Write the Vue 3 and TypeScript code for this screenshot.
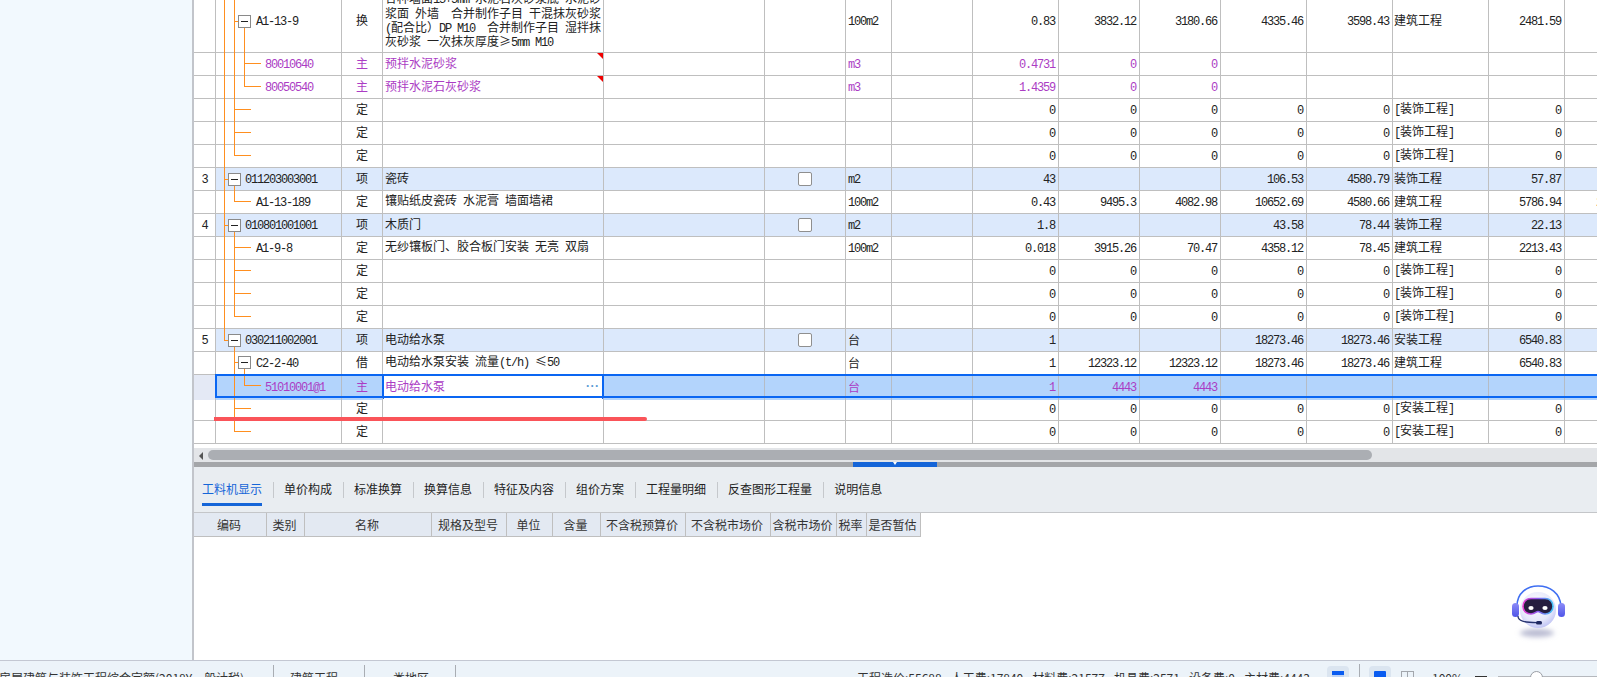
<script setup lang="ts">
interface RawRow {
  no?: string
  lv: number
  code: string
  type: string
  name: string
  chk?: boolean
  unit: string
  v: string[]
  eng: string
  val: string
  last?: string
  kind?: 'plain' | 'bill' | 'mat' | 'sel'
  flag?: boolean
  tall?: boolean
}
interface Cell {
  cls: string
  text: string
  chk?: boolean
  flag?: boolean
}

const empty = (eng: string): RawRow => ({
  lv: 1, code: '', type: '定', name: '', unit: '', v: ['0', '0', '0', '0', '0'], eng, val: '0',
})

const raw: RawRow[] = [
  {
    lv: 1, code: 'A1-13-9', type: '换', tall: true,
    name: '各种墙面15+5mm 水泥石灰砂浆底 水泥砂\n浆面 外墙  合并制作子目 干混抹灰砂浆\n(配合比）DP M10  合并制作子目 湿拌抹\n灰砂浆 一次抹灰厚度≥5mm M10',
    unit: '100m2', v: ['0.83', '3832.12', '3180.66', '4335.46', '3598.43'], eng: '建筑工程', val: '2481.59',
  },
  { lv: 2, code: '80010640', type: '主', name: '预拌水泥砂浆', unit: 'm3', v: ['0.4731', '0', '0', '', ''], eng: '', val: '', kind: 'mat', flag: true },
  { lv: 2, code: '80050540', type: '主', name: '预拌水泥石灰砂浆', unit: 'm3', v: ['1.4359', '0', '0', '', ''], eng: '', val: '', kind: 'mat', flag: true },
  empty('[装饰工程]'),
  empty('[装饰工程]'),
  empty('[装饰工程]'),
  { no: '3', lv: 0, code: '011203003001', type: '项', name: '瓷砖', chk: true, unit: 'm2', v: ['43', '', '', '106.53', '4580.79'], eng: '装饰工程', val: '57.87', kind: 'bill' },
  { lv: 1, code: 'A1-13-189', type: '定', name: '镶贴纸皮瓷砖 水泥膏 墙面墙裙', unit: '100m2', v: ['0.43', '9495.3', '4082.98', '10652.69', '4580.66'], eng: '建筑工程', val: '5786.94', last: '24629.33' },
  { no: '4', lv: 0, code: '010801001001', type: '项', name: '木质门', chk: true, unit: 'm2', v: ['1.8', '', '', '43.58', '78.44'], eng: '装饰工程', val: '22.13', kind: 'bill' },
  { lv: 1, code: 'A1-9-8', type: '定', name: '无纱镶板门、胶合板门安装 无亮 双扇', unit: '100m2', v: ['0.018', '3915.26', '70.47', '4358.12', '78.45'], eng: '建筑工程', val: '2213.43' },
  empty('[装饰工程]'),
  empty('[装饰工程]'),
  empty('[装饰工程]'),
  { no: '5', lv: 0, code: '030211002001', type: '项', name: '电动给水泵', chk: true, unit: '台', v: ['1', '', '', '18273.46', '18273.46'], eng: '安装工程', val: '6540.83', kind: 'bill' },
  { lv: 1, code: 'C2-2-40', type: '借', name: '电动给水泵安装 流量(t/h) ≤50', unit: '台', v: ['1', '12323.12', '12323.12', '18273.46', '18273.46'], eng: '建筑工程', val: '6540.83' },
  { lv: 2, code: '51010001@1', type: '主', name: '电动给水泵', unit: '台', v: ['1', '4443', '4443', '', ''], eng: '', val: '', kind: 'sel' },
  empty('[安装工程]'),
  empty('[安装工程]'),
]

const rows = raw.map((r) => {
  const cells: Cell[] = [
    { cls: 'c-no', text: r.no ?? '' },
    { cls: `c-code lv${r.lv}`, text: r.code },
    { cls: 'c-type', text: r.type },
    { cls: 'c-name', text: r.name, flag: r.flag },
    { cls: '', text: '' },
    { cls: 'c-chk', text: '', chk: r.chk },
    { cls: 'c-unit', text: r.unit },
    { cls: '', text: '' },
    ...r.v.map((t) => ({ cls: 'c-num', text: t })),
    { cls: 'c-eng', text: r.eng },
    { cls: 'c-num', text: r.val },
    { cls: 'c-num c-last', text: r.last ?? '' },
  ]
  return { cells, kind: r.kind ?? 'plain', tall: !!r.tall }
})

function runs(s: string): { t: string; lat: boolean }[] {
  const out: { t: string; lat: boolean }[] = []
  const re = /[\x20-\x7e\n]+|[^\x20-\x7e\n]+/g
  let m: RegExpExecArray | null
  while ((m = re.exec(s))) {
    out.push({ t: m[0], lat: /^[\x20-\x7e\n]/.test(m[0]) })
  }
  return out
}

const tabs = ['工料机显示', '单价构成', '标准换算', '换算信息', '特征及内容', '组价方案', '工程量明细', '反查图形工程量', '说明信息']
const heads = [
  { t: '编码', w: 73 }, { t: '类别', w: 38 }, { t: '名称', w: 127 }, { t: '规格及型号', w: 75 },
  { t: '单位', w: 46 }, { t: '含量', w: 48 }, { t: '不含税预算价', w: 85 }, { t: '不含税市场价', w: 85 },
  { t: '含税市场价', w: 66 }, { t: '税率', w: 30 }, { t: '是否暂估', w: 54 },
]
const stats = ['工程造价:55688', '人工费:17840', '材料费:21577', '机具费:2571', '设备费:0', '主材费:4443']

const treePath = [
  'M224.5 0V340.5H228',
  'M234.5 0V155.5H251 M234.5 109.5H251 M234.5 132.5H251 M234.5 21.5H238',
  'M244.5 28V86.5H261 M244.5 63.5H261',
  'M224.5 179.5H228 M224.5 225.5H228',
  'M234.5 186V201.5H251',
  'M234.5 232V316.5H251 M234.5 247.5H251 M234.5 270.5H251 M234.5 293.5H251',
  'M234.5 346V431.5H251 M234.5 362.5H238 M234.5 408.5H251',
  'M244.5 368V385.5H261',
].join(' ')
const boxes = [
  { x: 238, y: 15 },
  { x: 228, y: 173 },
  { x: 228, y: 219 },
  { x: 228, y: 334 },
  { x: 238, y: 356 },
]
</script>

<template>
  <div class="app">
    <div class="main">
      <aside class="side"></aside>
      <section class="content">
        <div class="grid-wrap">
          <div class="grid">
            <div
              v-for="(row, i) in rows"
              :key="i"
              class="row"
              :class="[row.kind, { tall: row.tall }]"
            >
              <div v-for="(c, j) in row.cells" :key="j" class="cell" :class="c.cls">
                <div class="txt"><span v-for="(r, k) in runs(c.text)" :key="k" :class="{ lat: r.lat }">{{ r.t }}</span></div>
                <i v-if="c.chk" class="chk"></i>
                <i v-if="c.flag" class="flag"></i>
              </div>
            </div>
          </div>
          <svg class="tree" width="200" height="444" viewBox="194 0 200 444" shape-rendering="crispEdges">
            <path :d="treePath" fill="none" stroke="#ff8f1f" stroke-width="1" />
            <g v-for="(b, i) in boxes" :key="i">
              <rect :x="b.x + 0.5" :y="b.y + 0.5" width="12" height="12" fill="#fff" stroke="#8a8a8a" />
              <path :d="`M${b.x + 3} ${b.y + 6.5}H${b.x + 10}`" stroke="#222" />
            </g>
          </svg>
          <div class="selbox"></div>
          <div class="dots">···</div>
          <div class="redline"></div>
        </div>

        <div class="hscroll">
          <div class="arrow"></div>
          <div class="thumb"></div>
        </div>
        <div class="splitter"><div class="grip"><i></i></div></div>

        <div class="tabs">
          <template v-for="(t, i) in tabs" :key="t">
            <span v-if="i > 0" class="tsep"></span>
            <span class="tab" :class="{ on: i === 0 }">{{ t }}</span>
          </template>
        </div>

        <div class="lower">
          <div class="thead">
            <div v-for="h in heads" :key="h.t" class="th" :style="{ width: h.w + 'px' }">{{ h.t }}</div>
          </div>
        </div>
      </section>
    </div>

    <footer class="status">
      <span class="s-item s-first">房屋建筑与装饰工程综合定额(2018Y一般计税)</span>
      <span class="s-sep s1"></span>
      <span class="s-item s-eng">建筑工程</span>
      <span class="s-sep s2"></span>
      <span class="s-item s-area">类地区</span>
      <span class="s-sep s3"></span>
      <div class="stats">
        <span v-for="s in stats" :key="s">{{ s }}</span>
      </div>
      <div class="ctrls">
        <span class="ib"><i class="ico-a"></i></span>
        <span class="vsep"></span>
        <span class="ib"><i class="ico-b"></i></span>
        <span class="ico-c"><i></i></span>
        <span class="pct">100%</span>
        <span class="minus"></span>
        <span class="slider"><i></i></span>
      </div>
    </footer>

    <svg class="robot" width="60" height="64" viewBox="0 0 60 64">
      <defs>
        <radialGradient id="rb" cx="45%" cy="35%" r="70%">
          <stop offset="0" stop-color="#ffffff" />
          <stop offset="0.65" stop-color="#e6e8fb" />
          <stop offset="1" stop-color="#b9bdf3" />
        </radialGradient>
        <linearGradient id="rv" x1="0" y1="0" x2="1" y2="0">
          <stop offset="0" stop-color="#e83fd0" />
          <stop offset="0.5" stop-color="#8a5cf0" />
          <stop offset="1" stop-color="#3fc4f5" />
        </linearGradient>
        <linearGradient id="re" x1="0" y1="0" x2="0" y2="1">
          <stop offset="0" stop-color="#8d8cf7" />
          <stop offset="1" stop-color="#4f55e8" />
        </linearGradient>
        <filter id="rs" x="-30%" y="-80%" width="160%" height="260%">
          <feGaussianBlur stdDeviation="2.4" />
        </filter>
        <filter id="rg" x="-50%" y="-50%" width="200%" height="200%">
          <feGaussianBlur stdDeviation="0.5" />
        </filter>
      </defs>
      <ellipse cx="30" cy="53" rx="17" ry="4" fill="#b9bbd2" filter="url(#rs)" />
      <path d="M10 26C10 13 20 6 31 6C43 6 53 13 54 26" fill="none" stroke="#3f6ff2" stroke-width="1.6" />
      <circle cx="31" cy="30" r="18" fill="url(#rb)" />
      <rect x="5" y="23" width="7" height="14" rx="3.5" fill="url(#re)" />
      <rect x="51" y="23" width="7" height="14" rx="3.5" fill="url(#re)" />
      <path d="M24 18.5H38C44 18.5 46 23 46 26.5C46 31.5 42 34 38 34C34 34 33 31.5 31 31.5C29 31.5 28 34 24 34C20 34 16 31.5 16 26.5C16 23 18 18.5 24 18.5Z" fill="#251d3f" stroke="url(#rv)" stroke-width="1.6" />
      <ellipse cx="24" cy="28" rx="2.6" ry="2" fill="#fff" filter="url(#rg)" />
      <ellipse cx="38" cy="28" rx="2.6" ry="2" fill="#fff" filter="url(#rg)" />
      <path d="M11 36C11 41 17 42.5 30 42.7" fill="none" stroke="#27336f" stroke-width="1.3" />
      <rect x="29" y="41" width="6" height="3.4" rx="1.5" fill="#1f2860" />
    </svg>
  </div>
</template>

<style scoped>
.app {
  position: relative;
  width: 1597px;
  height: 677px;
  overflow: hidden;
  font-family: "Noto Sans CJK SC", "Liberation Sans", sans-serif;
  font-size: 12px;
  color: #222;
  background: #fff;
}
.main {
  display: flex;
  height: 660px;
}
.side {
  width: 192px;
  flex: none;
  background: #f2f9fe;
  border-right: 2px solid #c2c5cb;
  box-sizing: content-box;
}
.content {
  flex: 1;
  min-width: 0;
  display: flex;
  flex-direction: column;
}
.grid-wrap {
  position: relative;
  height: 444px;
  overflow: hidden;
  flex: none;
}
.grid {
  margin-top: -10px;
}
.row {
  display: grid;
  width: max-content;
  height: 23px;
  grid-template-columns: 22px 126px 41px 221px 161px 81px 46px 81px 86px 81px 81px 86px 86px 96px 76px 86px;
  color: #222;
}
.row.tall {
  height: 63px;
}
.cell {
  position: relative;
  display: flex;
  align-items: center;
  box-sizing: border-box;
  border-right: 1px solid #bfbfbf;
  border-bottom: 1px solid #bfbfbf;
  white-space: pre;
  line-height: 22px;
  overflow: hidden;
  min-width: 0;
}
.lat {
  font-family: "Liberation Mono", "DejaVu Sans Mono", monospace;
  font-size: 12px;
  letter-spacing: -1.2px;
}
.c-no,
.c-type,
.c-chk {
  justify-content: center;
}
.c-type,
.c-name,
.c-eng {
  padding-bottom: 2px;
}
.c-code.lv0 { padding-left: 29px; }
.c-code.lv1 { padding-left: 40px; }
.c-code.lv2 { padding-left: 49px; }
.c-name,
.c-unit {
  padding-left: 2px;
}
.c-eng {
  padding-left: 1px;
}
.c-num {
  justify-content: flex-end;
  padding-right: 3px;
}
.c-last {
  padding-right: 7px;
  border-right: 0;
}
.tall .c-name .txt {
  line-height: 14.3px;
}
.tall .c-name .lat {
  line-height: 0;
}
.bill .cell {
  background: #dce9fc;
}
.bill .c-no,
.sel .c-no {
  background: #fff;
}
.mat .cell {
  color: #ab3cc4;
}
.sel .cell {
  background: #b3d4fc;
  color: #ab3cc4;
  border-right-color: #b5bcc6;
  border-bottom-color: transparent;
}
.sel .c-no {
  background: #e4e9f5;
}
.sel .c-name {
  background: #fff;
  overflow: visible;
}
.sel .c-name::before {
  content: "";
  position: absolute;
  top: 0;
  bottom: 0;
  left: -1px;
  border-left: 2px solid #0a66f2;
}
.sel .c-name::after {
  content: "";
  position: absolute;
  top: 0;
  bottom: 0;
  right: -1px;
  border-right: 2px solid #0a66f2;
}
.chk {
  width: 14px;
  height: 14px;
  box-sizing: border-box;
  background: #fff;
  border: 1px solid #8f8f8f;
  border-radius: 2px;
}
.flag {
  position: absolute;
  top: 0;
  right: 0;
  width: 0;
  height: 0;
  border-top: 6px solid #f00000;
  border-left: 6px solid transparent;
}
.tree {
  position: absolute;
  left: 0;
  top: 0;
  pointer-events: none;
}
.selbox {
  position: absolute;
  left: 21px;
  right: -4px;
  top: 374px;
  height: 24px;
  box-sizing: border-box;
  border: 2px solid #0a66f2;
}
.dots {
  position: absolute;
  left: 392px;
  top: 377px;
  line-height: 18px;
  font-family: "Liberation Sans", sans-serif;
  font-size: 12px;
  font-weight: 700;
  letter-spacing: 0.5px;
  color: #5b9bd5;
}
.redline {
  position: absolute;
  left: 20px;
  top: 417px;
  width: 433px;
  height: 4px;
  background: #fa5459;
  border-radius: 0 2px 2px 0;
}
.hscroll {
  position: relative;
  flex: none;
  height: 14px;
  margin-top: 4px;
  background: #e3e5e8;
}
.arrow {
  position: absolute;
  left: 5px;
  top: 4px;
  width: 0;
  height: 0;
  border-right: 4px solid #555;
  border-top: 4px solid transparent;
  border-bottom: 4px solid transparent;
}
.thumb {
  position: absolute;
  left: 14px;
  width: 1164px;
  top: 2px;
  height: 10px;
  border-radius: 5px;
  background: #abaeb3;
}
.splitter {
  flex: none;
  height: 5px;
  background: #a4a6a9;
  position: relative;
}
.grip {
  position: absolute;
  left: 659px;
  width: 84px;
  top: 0;
  height: 5px;
  background: #1565d8;
}
.grip i {
  position: absolute;
  left: 40px;
  top: 0;
  width: 0;
  height: 0;
  border-top: 3px solid #fff;
  border-left: 2px solid transparent;
  border-right: 2px solid transparent;
}
.tabs {
  flex: none;
  box-sizing: border-box;
  height: 46px;
  padding-left: 8px;
  padding-bottom: 2px;
  display: flex;
  align-items: center;
  background: #e9edf1;
  border-bottom: 1px solid #c4c6c9;
  color: #222;
}
.tab {
  position: relative;
  line-height: 18px;
}
.tab.on {
  color: #1565d8;
}
.tab.on::after {
  content: "";
  position: absolute;
  left: 0;
  right: 0;
  top: 23px;
  height: 3px;
  background: #1565d8;
}
.tsep {
  width: 1px;
  height: 16px;
  margin: 3px 10px 0 11px;
  background: #c5c8cc;
}
.lower {
  flex: 1;
  background: #fff;
}
.thead {
  display: flex;
  height: 24px;
  color: #333;
}
.th {
  box-sizing: border-box;
  flex: none;
  height: 24px;
  line-height: 24px;
  padding-right: 2px;
  text-align: center;
  white-space: nowrap;
  background: #e3e9f2;
  border-right: 1px solid #bfbfbf;
  border-bottom: 1px solid #bfbfbf;
}
.status {
  position: relative;
  box-sizing: border-box;
  height: 33px;
  display: flex;
  align-items: center;
  background: #ecf3f9;
  border-top: 1px solid #c3c7d2;
  color: #333;
  white-space: nowrap;
}
.s-first {
  margin-left: -1px;
  width: 274px;
  flex: none;
}
.s-sep {
  width: 1px;
  height: 24px;
  background: #a9adb3;
  flex: none;
}
.s-eng {
  margin-left: 16px;
  width: 74px;
  flex: none;
}
.s-area {
  margin-left: 28px;
  width: 62px;
  flex: none;
}
.stats {
  margin-left: 401px;
  display: flex;
  gap: 9px;
  flex: none;
  width: 470px;
}
.ctrls {
  display: flex;
  align-items: center;
  flex: none;
}
.ib {
  width: 22px;
  height: 22px;
  border-radius: 4px;
  background: #dbe5f0;
  display: flex;
  align-items: center;
  justify-content: center;
}
.ico-a {
  width: 12px;
  height: 12px;
  background: linear-gradient(#0a5cf0 0 4px, #bcd2f5 4px 6px, #0a5cf0 6px);
}
.ico-b {
  width: 12px;
  height: 12px;
  background: #0a5cf0;
  border-radius: 1px;
}
.vsep {
  width: 1px;
  height: 26px;
  margin: 0 9px 0 10px;
  background: #a9adb3;
}
.ico-c {
  margin-left: 10px;
  width: 13px;
  height: 12px;
  box-sizing: border-box;
  border: 1px solid #a3a7ad;
  display: flex;
  justify-content: center;
}
.ico-c i {
  width: 1px;
  background: #a3a7ad;
}
.pct {
  margin-left: 18px;
  width: 43px;
  flex: none;
}
.minus {
  width: 12px;
  height: 1px;
  margin-bottom: 2px;
  background: #333;
  flex: none;
}
.slider {
  position: relative;
  margin-left: 11px;
  margin-bottom: 2px;
  width: 99px;
  height: 1px;
  background: #b5b8bd;
  flex: none;
}
.slider i {
  position: absolute;
  left: 32px;
  top: -5px;
  width: 13px;
  height: 13px;
  box-sizing: border-box;
  border-radius: 50%;
  background: #fff;
  border: 1px solid #9a9ea5;
}
.robot {
  position: absolute;
  left: 1507px;
  top: 580px;
}
</style>

<style>
html,
body {
  margin: 0;
  overflow: hidden;
}
</style>
